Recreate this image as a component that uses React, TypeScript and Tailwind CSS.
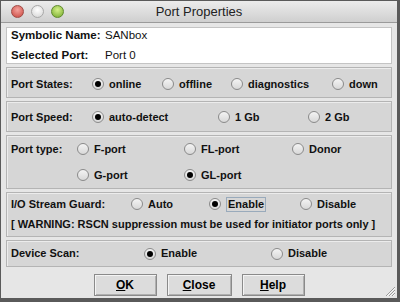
import React from 'react';

type Opt = { label: string; checked?: boolean; focus?: boolean; w?: string };

function Radio({ checked }: { checked?: boolean }) {
  return (
    <span className="relative inline-flex h-[12px] w-[12px] shrink-0 items-center justify-center rounded-full border border-[#8a8a8a] bg-gradient-to-b from-[#f4f4f4] to-[#d8d8d8]">
      {checked && <span className="h-[6px] w-[6px] rounded-full bg-black" />}
    </span>
  );
}

function Option({ label, checked, focus, w }: Opt) {
  return (
    <div className={`flex items-center gap-[5px] ${w ?? ''}`}>
      <Radio checked={checked} />
      <span className={focus ? 'border border-[#9ab] px-[1px] leading-[13px]' : ''}>{label}</span>
    </div>
  );
}

function Panel({ className, children }: { className?: string; children: React.ReactNode }) {
  return (
    <div className={`border border-[#b4b4b4] bg-[#d6d6d6] shadow-[inset_1px_1px_0_#ececec] ${className ?? ''}`}>
      {children}
    </div>
  );
}

function Button({ label, u, w }: { label: string; u: number; w: string }) {
  return (
    <button className={`flex h-[22px] ${w} items-center justify-center border border-[#8a8a8a] bg-[#dcdcdc] shadow-[inset_1px_1px_0_#f4f4f4,inset_-1px_-1px_0_#b0b0b0] text-[12px] font-bold text-black`}>
      <span>
        {label.slice(0, u)}
        <span className="underline">{label[u]}</span>
        {label.slice(u + 1)}
      </span>
    </button>
  );
}

export default function App() {
  return (
    <div className="h-[302px] w-[400px] overflow-hidden bg-[#5a5a5a] p-[1px] pr-[3px] font-['Liberation_Sans',Arial,sans-serif] text-[11px] font-bold text-[#111]">
      <div className="relative flex h-[297px] flex-col bg-[#e6e6e6]">
        {/* title bar */}
        <div className="relative flex h-[22px] shrink-0 items-center justify-center border-b border-[#9a9a9a] bg-gradient-to-b from-[#ececec] to-[#cfcfcf]">
          <div className="absolute left-[10px] top-[4px] flex gap-[7px]">
            <span className="h-[13px] w-[13px] rounded-full border border-[#a04a44] bg-[radial-gradient(circle_at_50%_35%,#f4a29c,#c8463e)]" />
            <span className="h-[13px] w-[13px] rounded-full border border-[#a8a8a8] bg-[radial-gradient(circle_at_50%_35%,#ffffff,#d2d2d2)]" />
            <span className="h-[13px] w-[13px] rounded-full border border-[#5f8a2c] bg-[radial-gradient(circle_at_50%_35%,#d4f088,#74a82c)]" />
          </div>
          <span className="text-[13px] font-normal text-[#222]">Port Properties</span>
        </div>

        <div className="flex flex-1 flex-col gap-[3px] px-[5px] pt-[4px]">
          {/* info */}
          <div className="flex h-[37px] flex-col justify-center gap-[2px] border border-[#c4c4c4] bg-white pl-[4px] text-[11.5px]">
            <div className="flex">
              <span className="w-[94px]">Symbolic Name:</span>
              <span className="font-normal">SANbox</span>
            </div>
            <div className="flex">
              <span className="w-[94px]">Selected Port:</span>
              <span className="font-normal">Port 0</span>
            </div>
          </div>

          <Panel className="flex h-[31px] items-center pl-[4px] pt-[3px]">
            <span className="w-[81px]">Port States:</span>
            <Option label="online" checked w="w-[70px]" />
            <Option label="offline" w="w-[69px]" />
            <Option label="diagnostics" w="w-[101px]" />
            <Option label="down" />
          </Panel>

          <Panel className="flex h-[31px] items-center pl-[4px] pt-[1px]">
            <span className="w-[81px]">Port Speed:</span>
            <Option label="auto-detect" checked w="w-[126px]" />
            <Option label="1 Gb" w="w-[90px]" />
            <Option label="2 Gb" />
          </Panel>

          <Panel className="flex h-[54px] flex-col justify-center gap-[10px] pl-[4px]">
            <div className="flex items-center">
              <span className="w-[66px]">Port type:</span>
              <Option label="F-port" w="w-[107px]" />
              <Option label="FL-port" w="w-[108px]" />
              <Option label="Donor" />
            </div>
            <div className="flex items-center">
              <span className="w-[66px]" />
              <Option label="G-port" w="w-[107px]" />
              <Option label="GL-port" checked />
            </div>
          </Panel>

          <Panel className="flex h-[45px] flex-col justify-end gap-[3px] pb-[4px] pl-[4px]">
            <div className="flex items-center">
              <span className="w-[120px]">I/O Stream Guard:</span>
              <Option label="Auto" w="w-[78px]" />
              <Option label="Enable" checked focus w="w-[91px]" />
              <Option label="Disable" />
            </div>
            <div>[ WARNING: RSCN suppression must be used for initiator ports only ]</div>
          </Panel>

          <Panel className="flex h-[27px] items-center pl-[4px]">
            <span className="w-[133px]">Device Scan:</span>
            <Option label="Enable" checked w="w-[127px]" />
            <Option label="Disable" />
          </Panel>

          <div className="mt-[4px] flex justify-center gap-[10px]">
            <Button label="OK" u={0} w="w-[63px]" />
            <Button label="Close" u={0} w="w-[65px]" />
            <Button label="Help" u={0} w="w-[63px]" />
          </div>
        </div>

        {/* resize grip */}
        <svg className="absolute bottom-[1px] right-[1px]" width="12" height="12" viewBox="0 0 12 12">
          <path d="M11 2 L2 11 M11 5 L5 11 M11 8 L8 11" stroke="#9a9a9a" strokeWidth="1" />
          <path d="M11 3 L3 11 M11 6 L6 11 M11 9 L9 11" stroke="#f8f8f8" strokeWidth="1" />
        </svg>
      </div>
    </div>
  );
}
